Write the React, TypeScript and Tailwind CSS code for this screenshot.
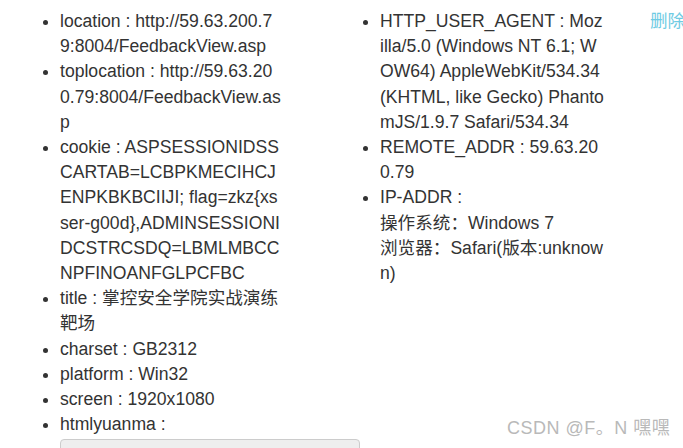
import React from 'react';

const leftItems: { k: string; v: string }[] = [
  { k: 'location', v: 'http://59.63.200.79:8004/FeedbackView.asp' },
  { k: 'toplocation', v: 'http://59.63.200.79:8004/FeedbackView.asp' },
  {
    k: 'cookie',
    v: 'ASPSESSIONIDSSCARTAB=LCBPKMECIHCJENPKBKBCIIJI; flag=zkz{xsser-g00d},ADMINSESSIONIDCSTRCSDQ=LBMLMBCCNPFINOANFGLPCFBC',
  },
  { k: 'title', v: '掌控安全学院实战演练靶场' },
  { k: 'charset', v: 'GB2312' },
  { k: 'platform', v: 'Win32' },
  { k: 'screen', v: '1920x1080' },
];

const App = () => {
  return (
    <div
      className="h-[448px] overflow-hidden bg-white text-[#333] text-[17.6px] leading-[25.2px] relative"
      style={{ fontFamily: '"Liberation Sans", "Noto Sans CJK SC", sans-serif' }}
    >
      <div className="flex pt-[9px]">
        {/* left column */}
        <div className="w-[320px] shrink-0">
          <ul className="list-disc pl-[60px] pr-[38px] break-all">
            {leftItems.map((item) => (
              <li key={item.k}>
                {item.k} : {item.v}
              </li>
            ))}
            <li>
              htmlyuanma :
              <textarea
                readOnly
                className="block w-[300px] h-[120px] mt-[2px] bg-[#eee] border border-[#ccc] rounded-[4px] overflow-y-scroll resize-none"
              />
            </li>
          </ul>
        </div>

        {/* right column */}
        <div className="w-[320px] shrink-0">
          <ul className="list-disc pl-[60px] pr-[34px] break-all">
            <li>
              HTTP_USER_AGENT : Mozilla/5.0 (Windows NT 6.1; WOW64) AppleWebKit/534.34 (KHTML, like Gecko) PhantomJS/1.9.7 Safari/534.34
            </li>
            <li>REMOTE_ADDR : 59.63.200.79</li>
            <li>
              IP-ADDR :
              <br />
              操作系统：Windows 7
              <br />
              浏览器：Safari(版本:unknown)
            </li>
          </ul>
        </div>

        <div className="pl-[10px] whitespace-nowrap">
          <a href="#" className="text-[#6fcbe3]">
            删除
          </a>
        </div>
      </div>

      <div className="absolute left-[507px] top-[416px] text-[18px] text-[#b9b9b9] tracking-[0.5px]">
        CSDN @F。N 嘿嘿
      </div>
    </div>
  );
};

export default App;
